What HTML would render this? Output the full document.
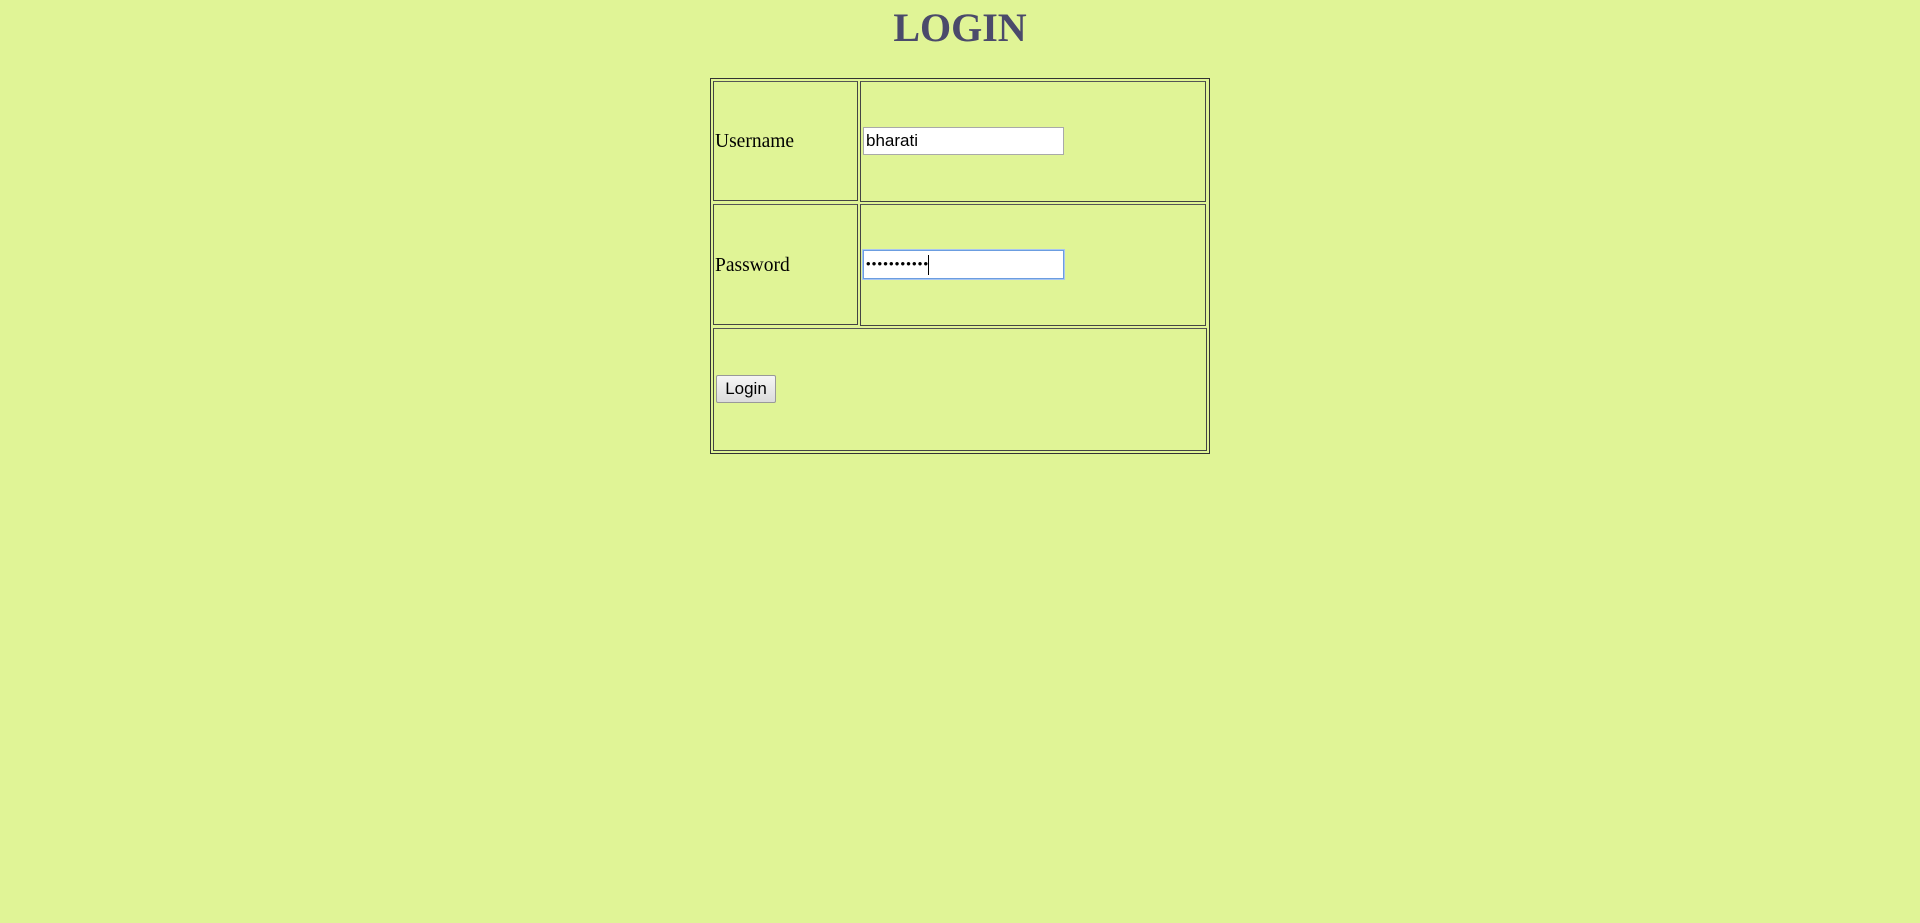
<!DOCTYPE html>
<html><head><style>
body{margin:0;width:1920px;height:923px;background:#e0f496;position:relative;overflow:hidden;font-family:"Liberation Serif",serif;}
.a{position:absolute;box-sizing:border-box;}
h1{position:absolute;margin:0;left:0;width:1920px;top:4px;text-align:center;font-size:40px;font-weight:bold;color:#4b4a6b;font-family:"Liberation Serif",serif;}
.c{border:1px solid #444;border-top-color:#555;}
.o{border:1px solid #333;}
.lbl{font-size:19.5px;color:#000;}
.inp{background:#fff;border:1px solid #a9a9a9;font-family:"Liberation Sans",sans-serif;font-size:17px;padding:2px 2px;line-height:22px;}
.btn{border:1px solid #999;border-radius:2px;background:linear-gradient(#f6f6f6,#dcdcdc);font-family:"Liberation Sans",sans-serif;font-size:17px;text-align:center;line-height:26px;}
</style></head><body>
<h1>LOGIN</h1>
<div class="a o" style="left:710px;top:78px;width:500px;height:376px;"></div>
<div class="a c" style="left:713px;top:81px;width:145px;height:120px;"></div>
<div class="a c" style="left:860px;top:81px;width:346px;height:121px;"></div>
<div class="a c" style="left:713px;top:204px;width:145px;height:121px;"></div>
<div class="a c" style="left:860px;top:204px;width:346px;height:122px;"></div>
<div class="a c" style="left:713px;top:328px;width:494px;height:123px;"></div>
<div class="a lbl" style="left:715px;top:131px;">Username</div>
<div class="a lbl" style="left:715px;top:255px;">Password</div>
<div class="a inp" style="left:863px;top:127px;width:201px;height:28px;">bharati</div>
<div class="a inp" style="left:863px;top:250px;width:201px;height:29px;border:1px solid #6b9de0;box-shadow:0 0 0 1px #a9c6f0;letter-spacing:1.2px;font-size:13px;">•••••••••••<span style="display:inline-block;width:1px;height:20px;background:#000;vertical-align:middle;margin-left:-1px"></span></div>
<div class="a btn" style="left:716px;top:375px;width:60px;height:28px;">Login</div>
</body></html>
